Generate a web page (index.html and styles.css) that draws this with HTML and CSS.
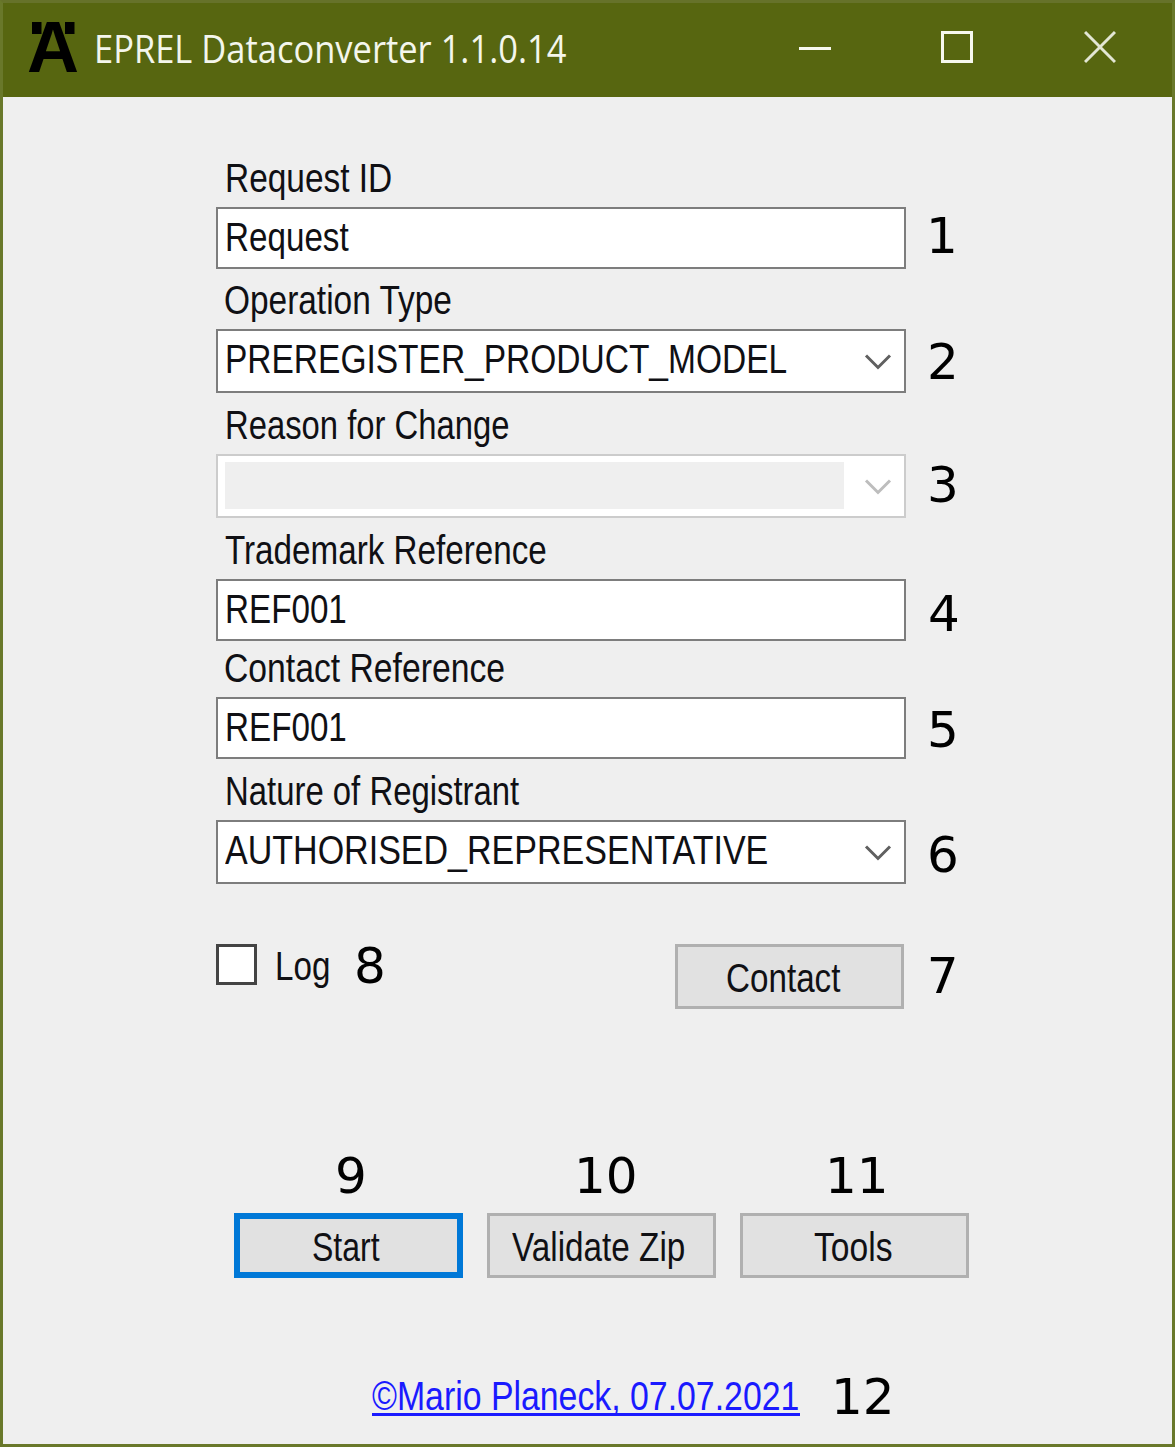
FILE: index.html
```html
<!DOCTYPE html>
<html lang="en">
<head>
<meta charset="utf-8">
<title>EPREL Dataconverter 1.1.0.14</title>
<link rel="stylesheet" href="styles.css">
</head>
<body>
<div class="window">
  <header class="titlebar">
    <svg class="logo" width="58" height="90" viewBox="-3 -17 58 90">
      <text class="logo-letter" x="0" y="52" textLength="52" lengthAdjust="spacingAndGlyphs">A</text>
      <rect x="5" y="2" width="9.5" height="12"/><rect x="38" y="2" width="9.5" height="12"/>
    </svg>
    <h1 class="title"><span class="t t-title">EPREL Dataconverter 1.1.0.14</span></h1>
    <div class="controls">
      <svg width="32" height="34" viewBox="0 0 32 34"><path d="M0 18.5H32" /></svg>
      <svg width="32" height="34" viewBox="0 0 32 34"><rect x="1.5" y="2.5" width="29" height="29"/></svg>
      <svg class="close" width="32" height="34" viewBox="0 0 32 34"><path d="M1 2L31 32M31 2L1 32"/></svg>
    </div>
  </header>
  <main class="content">
    <section class="field">
      <label class="label"><span class="t t-request-id">Request ID</span></label>
      <div class="row"><div class="box input"><span class="t t-request">Request</span></div><span class="num n1">1</span></div>
    </section>
    <section class="field">
      <label class="label label-round"><span class="t t-operation">Operation Type</span></label>
      <div class="row"><div class="box select"><span class="t t-prereg">PREREGISTER_PRODUCT_MODEL</span><svg class="chevron" width="28" height="18" viewBox="0 0 28 18"><path d="M2 2.5L14 14.5L26 2.5"/></svg></div><span class="num n2">2</span></div>
    </section>
    <section class="field">
      <label class="label"><span class="t t-reason">Reason for Change</span></label>
      <div class="row"><div class="box select disabled"><span class="blank"></span><svg class="chevron" width="28" height="18" viewBox="0 0 28 18"><path d="M2 2.5L14 14.5L26 2.5"/></svg></div><span class="num n3">3</span></div>
    </section>
    <section class="field">
      <label class="label"><span class="t t-trademark">Trademark Reference</span></label>
      <div class="row"><div class="box input"><span class="t t-ref">REF001</span></div><span class="num n4">4</span></div>
    </section>
    <section class="field field-tight">
      <label class="label label-round"><span class="t t-contact-ref">Contact Reference</span></label>
      <div class="row"><div class="box input"><span class="t t-ref">REF001</span></div><span class="num n5">5</span></div>
    </section>
    <section class="field">
      <label class="label"><span class="t t-nature">Nature of Registrant</span></label>
      <div class="row"><div class="box select"><span class="t t-auth">AUTHORISED_REPRESENTATIVE</span><svg class="chevron" width="28" height="18" viewBox="0 0 28 18"><path d="M2 2.5L14 14.5L26 2.5"/></svg></div><span class="num n6">6</span></div>
    </section>
    <div class="options">
      <span class="checkbox"></span>
      <span class="log"><span class="t t-log">Log</span></span>
      <span class="num n8">8</span>
      <button class="button b-contact"><span class="t t-contact">Contact</span></button>
      <span class="num n7">7</span>
    </div>
    <div class="actions">
      <div class="action"><span class="num n9">9</span><button class="button primary"><span class="t t-start">Start</span></button></div>
      <div class="action"><span class="num n10">10</span><button class="button b-validate"><span class="t t-validate">Validate Zip</span></button></div>
      <div class="action"><span class="num n11">11</span><button class="button b-tools"><span class="t t-tools">Tools</span></button></div>
    </div>
    <footer class="credit">
      <a class="link"><span class="t t-link">©Mario Planeck, 07.07.2021</span></a>
      <span class="num n12">12</span>
    </footer>
  </main>
</div>
</body>
</html>
```

FILE: styles.css
```css
* { box-sizing: border-box; }
body { margin: 0; font: 41px/46px "Liberation Sans", Arial, sans-serif; color: #101014; }
.window { width: 1175px; height: 1447px; background: #efefef; border: 3px solid #69782a; border-top-color: #66722a; overflow: hidden; }

.titlebar { height: 94px; background: #576610; display: flex; align-items: flex-start; padding: 0 56px 0 21px; }
.logo { flex: none; }
.logo-letter { font: bold 73px "Liberation Sans", Arial, sans-serif; }
.title { margin: 18px 0 0 12px; width: 480px; font: 39px/54px "Open Sans", sans-serif; color: #f4f6ec; }
.controls { display: flex; gap: 110px; margin-left: auto; margin-top: 27px; }
.controls svg { fill: none; stroke: #f6f8ee; stroke-width: 3; }
.controls .close { stroke: #e3e6d4; margin-left: 1px; }

/* Narrow system lettering: each text carries its own horizontal scale. */
.t { display: inline-block; white-space: pre; transform-origin: 0 50%; transform: scaleX(var(--s, .81)); }
.t-title { --s: .884; }
.t-request-id { --s: .815; }
.t-operation { --s: .815; }
.t-prereg { --s: .817; }
.t-reason { --s: .8; }
.t-trademark { --s: .81; }
.t-contact-ref { --s: .822; }
.t-nature { --s: .802; }
.t-auth { --s: .83; }
.t-start { --s: .78; }
.t-validate { --s: .812; }
.t-tools { --s: .82; }
.t-link { --s: .825; }

.content { padding: 57px 0 0 213px; }
.field { margin-bottom: 7px; }
.field-tight { margin-top: -4px; margin-bottom: 8px; }
.label { display: block; height: 46px; line-height: 48px; margin-bottom: 7px; padding-left: 9px; }
.label-round { padding-left: 8px; }
.row { display: flex; height: 65px; }
.row:has(.input) { height: 62px; }
.box { width: 690px; background: #fff; border: 2px solid #7d7d7d; padding: 5px 0 0 7px; display: flex; align-items: flex-start; flex: none; }
.box .t { flex: none; }
.input { height: 62px; }
.select { position: relative; height: 64px; }
.chevron { position: absolute; right: 12px; top: 22px; fill: none; stroke: #606060; stroke-width: 3; }
.disabled { border-color: #cccccc; padding: 6px 0 0 7px; }
.disabled .chevron { stroke: #bdbdbd; }
.blank { width: 619px; height: 47px; background: #efefef; }

.num { display: block; flex: none; font: 50px/58px "DejaVu Sans", sans-serif; color: #000; height: 58px; }
.n1 { margin: 0 0 0 20px; }
.n2 { margin: 4px 0 0 21px; }
.n3 { margin: 2px 0 0 21px; }
.n4 { margin: 6px 0 0 22px; }
.n5 { margin: 4px 0 0 21px; }
.n6 { margin: 6px 0 0 21px; }

.options { display: flex; align-items: flex-start; height: 66px; margin-top: 59px; }
.checkbox { width: 41px; height: 41px; background: #fff; border: 3px solid #444; }
.log { width: 60px; margin: -1px 0 0 18px; }
.n8 { margin: -7px 0 0 19px; }
.button { font: inherit; color: inherit; text-align: left; display: block; width: 229px; height: 65px; padding: 2px 0 0; margin: 0; background: #e1e1e1; border: 3px solid #b0b0b0; flex: none; }
.button .t { display: block; }
.b-contact { margin-left: 289px; padding-left: 48px; }
.n7 { margin: 3px 0 0 23px; }

.actions { display: flex; gap: 24px; padding-left: 18px; margin-top: 137px; }
.primary { border: 6px solid #0078d7; padding: 2px 0 0 72px; }
.b-validate { padding-left: 22px; }
.b-tools { padding-left: 71px; }
.n9 { margin-left: 101px; }
.n10 { margin-left: 87px; }
.n11 { margin-left: 85px; }
.action .num { height: 66px; }

.credit { display: flex; margin-top: 90px; padding-left: 156px; }
.link { display: block; width: 428px; height: 43px; margin-top: 5px; border-bottom: 3px solid #1a1aff; color: #1a1aff; }
.n12 { margin-left: 31px; }
```
